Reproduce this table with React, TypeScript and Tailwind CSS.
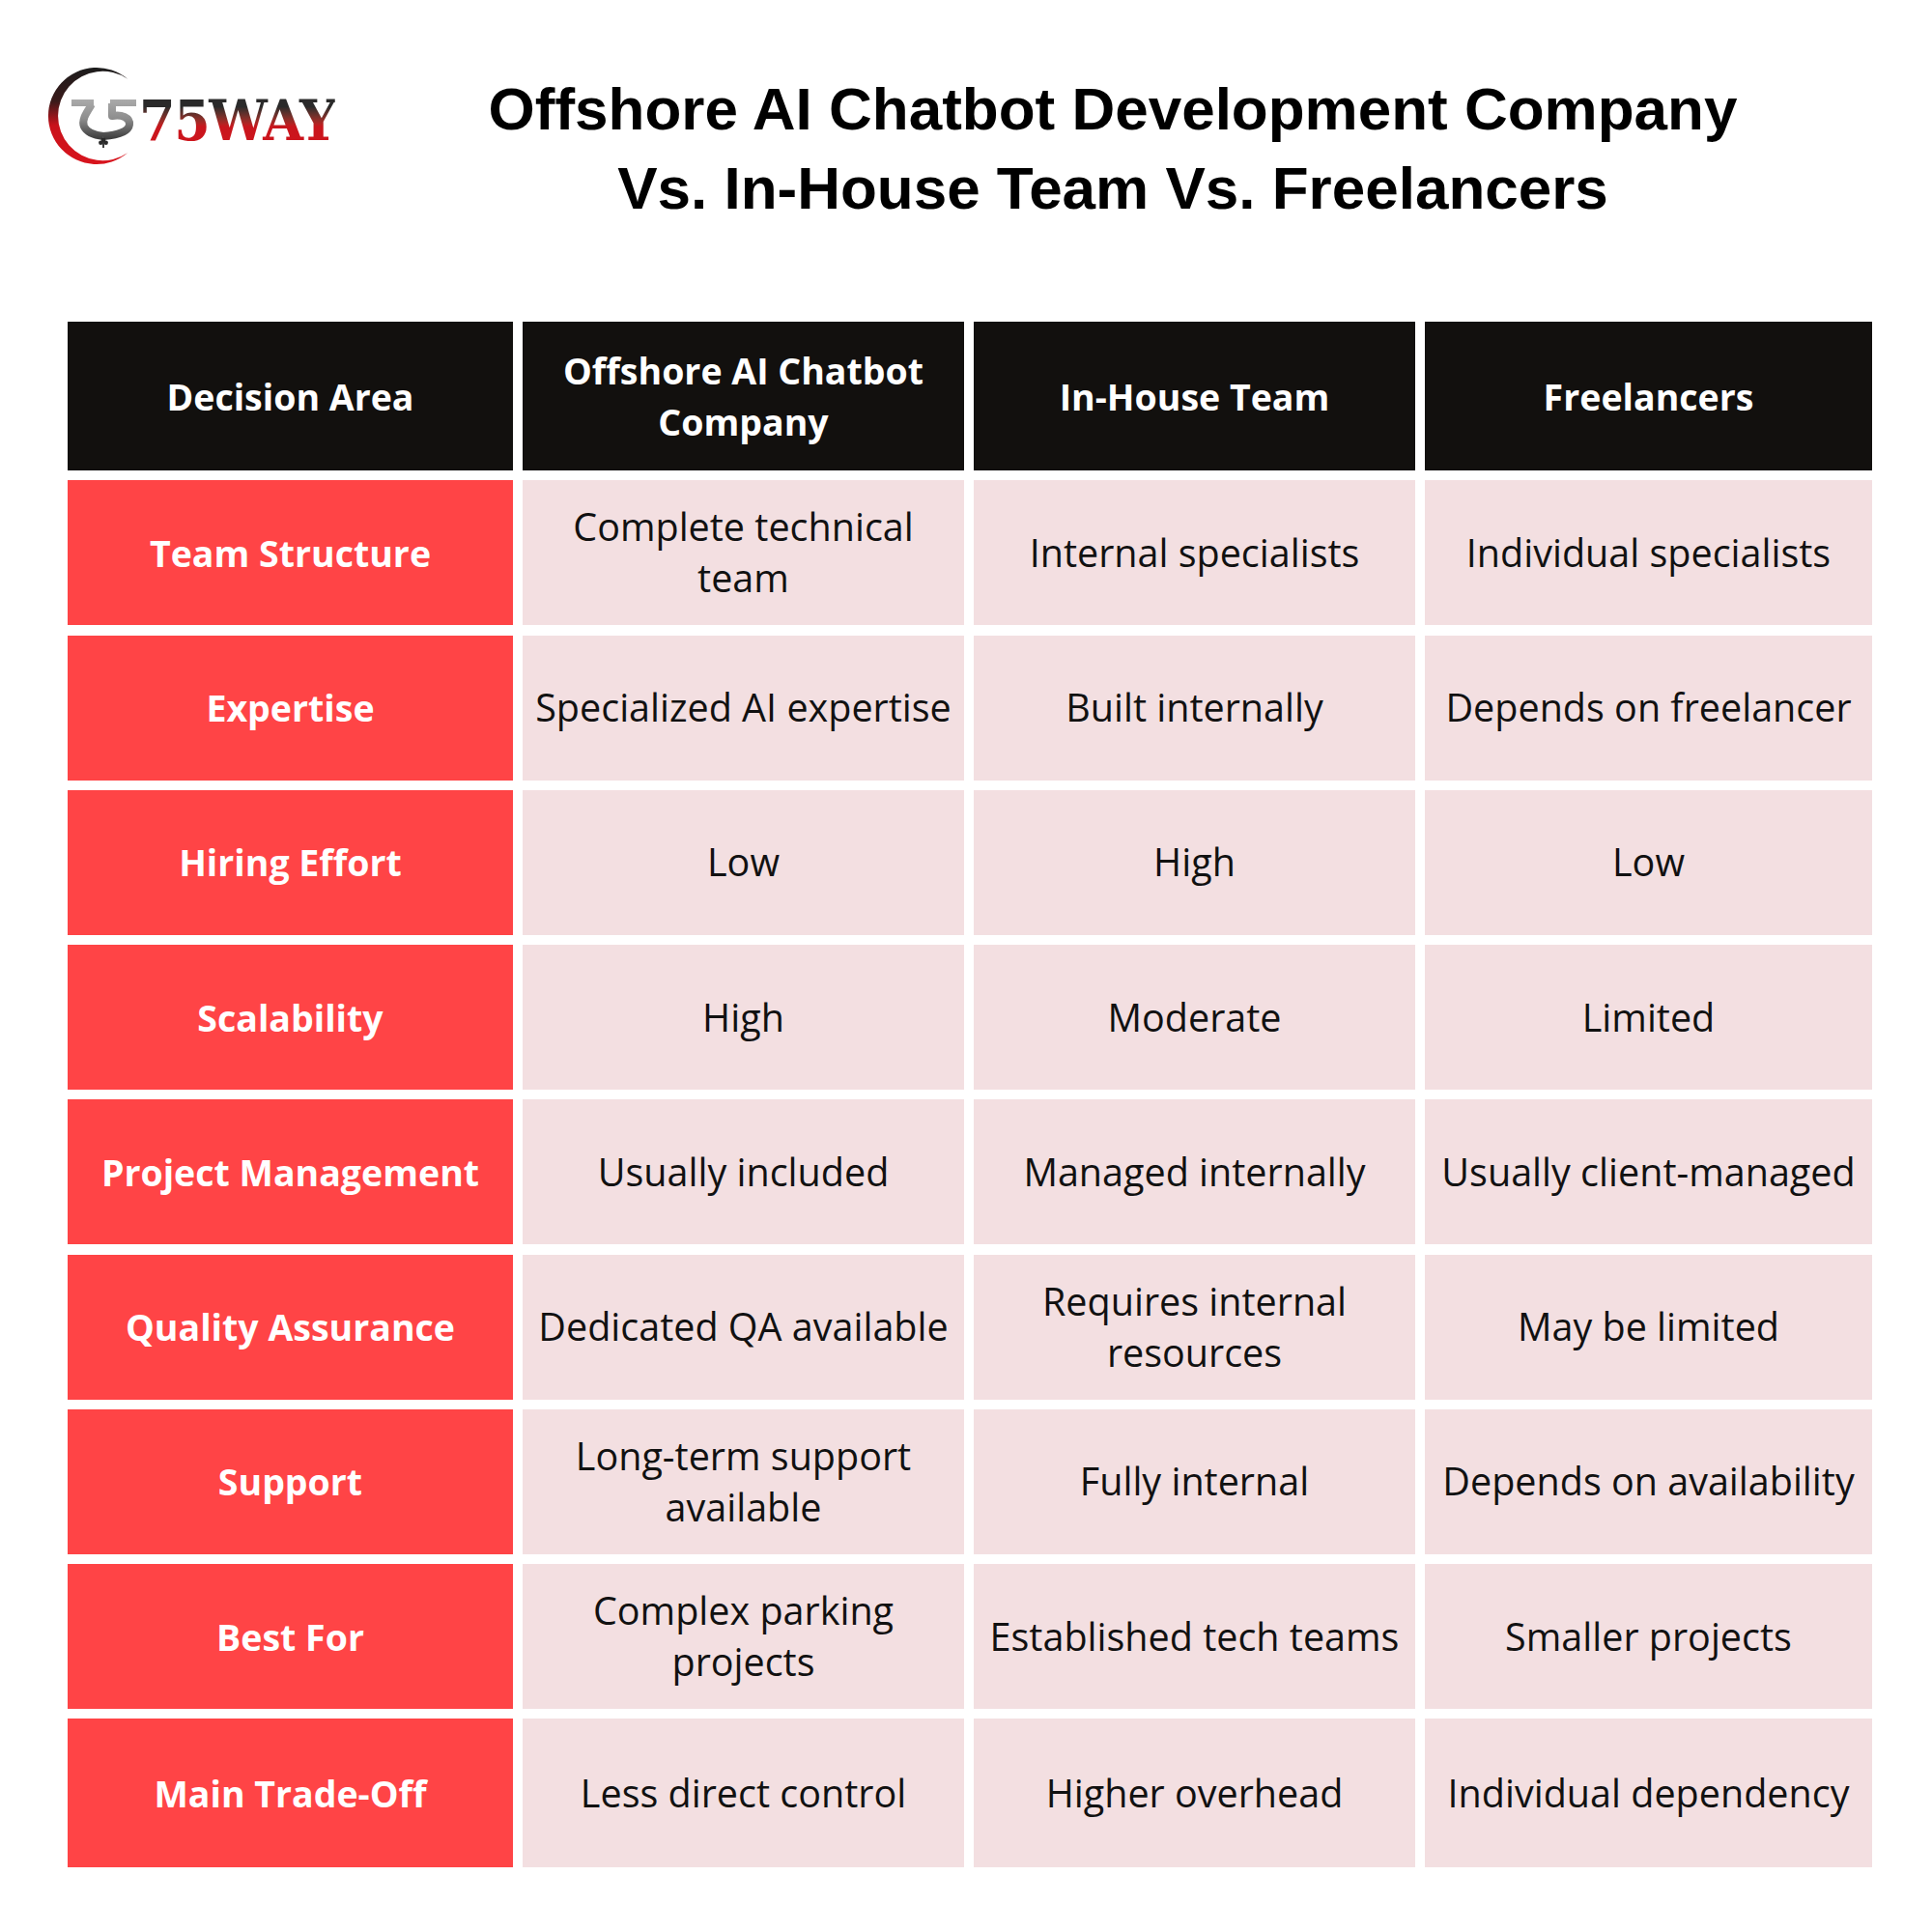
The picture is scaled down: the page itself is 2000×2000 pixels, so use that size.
import React from "react";

// rows of the comparison table: [area, offshore, in-house, freelancers]
const rows: string[][] = [
  ["Team Structure", "Complete technical\nteam", "Internal specialists", "Individual specialists"],
  ["Expertise", "Specialized AI expertise", "Built internally", "Depends on freelancer"],
  ["Hiring Effort", "Low", "High", "Low"],
  ["Scalability", "High", "Moderate", "Limited"],
  ["Project Management", "Usually included", "Managed internally", "Usually client-managed"],
  ["Quality Assurance", "Dedicated QA available", "Requires internal\nresources", "May be limited"],
  ["Support", "Long-term support\navailable", "Fully internal", "Depends on availability"],
  ["Best For", "Complex parking\nprojects", "Established tech teams", "Smaller projects"],
  ["Main Trade-Off", "Less direct control", "Higher overhead", "Individual dependency"],
];

const headers = ["Decision Area", "Offshore AI Chatbot\nCompany", "In-House Team", "Freelancers"];

function Lines({ text }: { text: string }) {
  const parts = text.split("\n");
  return (
    <span>
      {parts.map((p, i) => (
        <React.Fragment key={i}>
          {p}
          {i < parts.length - 1 && <br />}
        </React.Fragment>
      ))}
    </span>
  );
}

function LogoMark() {
  return (
    <svg width="107" height="120" viewBox="0 0 107 120" className="shrink-0">
      <defs>
        <linearGradient id="ring" x1="0" y1="0" x2="0" y2="1">
          <stop offset="0%" stopColor="#1c1c1c" />
          <stop offset="35%" stopColor="#3a1a1a" />
          <stop offset="60%" stopColor="#c9121b" />
          <stop offset="100%" stopColor="#d8141d" />
        </linearGradient>
        <linearGradient id="glyph" gradientUnits="userSpaceOnUse" x1="0" y1="43" x2="0" y2="88">
          <stop offset="0%" stopColor="#ababab" />
          <stop offset="45%" stopColor="#8c8c8c" />
          <stop offset="100%" stopColor="#2c2c2c" />
        </linearGradient>
      </defs>
      <path
        d="M92.1 21.7 A50 50 0 1 0 92.1 98.3 A46.2 46.2 0 1 1 92.1 21.7 Z"
        fill="url(#ring)"
      />
      <g stroke="url(#glyph)" fill="none" strokeLinejoin="round">
        <path d="M34 46.5 H57" strokeWidth="7" />
        <path d="M55 48 C50 56 44 64 47 71 C50 77 58 80 67 81" strokeWidth="8" />
        <path d="M74 46.5 H101" strokeWidth="7" />
        <path d="M76 47 V60 C86 58 95 62 94 69 C93 76 82 80 67 81" strokeWidth="8" />
      </g>
      <g fill="#2a2a2a">
        <circle cx="67" cy="85" r="2.4" />
        <circle cx="64.3" cy="87.8" r="2.2" />
        <circle cx="69.7" cy="87.8" r="2.2" />
        <rect x="66.1" y="87" width="1.8" height="6" />
      </g>
    </svg>
  );
}

export default function App() {
  return (
    <div className="w-[2000px] h-[2000px] bg-white font-['Open_Sans',sans-serif]">
      <div className="flex items-start pt-[60px] h-[333px]">
        <div className="ml-[40px] w-[310px] shrink-0 flex items-start">
          <LogoMark />
          <span className="shrink-0 whitespace-nowrap -ml-[3px] mt-[36px] origin-left scale-x-[0.93] font-['DejaVu_Serif',serif] font-bold text-[58px] leading-none tracking-tight bg-linear-to-b from-[#2a2a2a] from-25% via-[#c8161d] via-60% to-[#d0141c] bg-clip-text text-transparent">
            75WAY
          </span>
        </div>
        <h1 className="ml-[48px] w-[1508px] shrink-0 pt-[12px] text-center font-['Liberation_Sans',Arial,sans-serif] font-bold text-[62px] leading-[82px] text-black">
          Offshore AI Chatbot Development Company
          <br />
          Vs. In-House Team Vs. Freelancers
        </h1>
      </div>

      <div className="ml-[70px] w-[1868px] grid grid-cols-[461px_457px_457px_463px] gap-x-[10px] gap-y-[10.25px]">
        {headers.map((h) => (
          <div
            key={h}
            className="h-[154px] bg-[#12100e] flex items-center justify-center text-center px-2 text-white font-bold text-[37.5px] leading-[53px]"
          >
            <Lines text={h} />
          </div>
        ))}
        {rows.map((r, ri) => {
          const h = ri === rows.length - 1 ? "h-[154px]" : "h-[150px]";
          return (
            <React.Fragment key={r[0]}>
              <div className={`${h} bg-[#ff4446] flex items-center justify-center text-center px-2 text-white font-bold text-[37.5px] leading-[53px]`}>
                {r[0]}
              </div>
              {r.slice(1).map((c, i) => (
                <div
                  key={i}
                  className={`${h} bg-[#f3dfe1] flex items-center justify-center text-center px-1 text-[#111] text-[39.5px] leading-[53px] whitespace-nowrap`}
                >
                  <Lines text={c} />
                </div>
              ))}
            </React.Fragment>
          );
        })}
      </div>
    </div>
  );
}
